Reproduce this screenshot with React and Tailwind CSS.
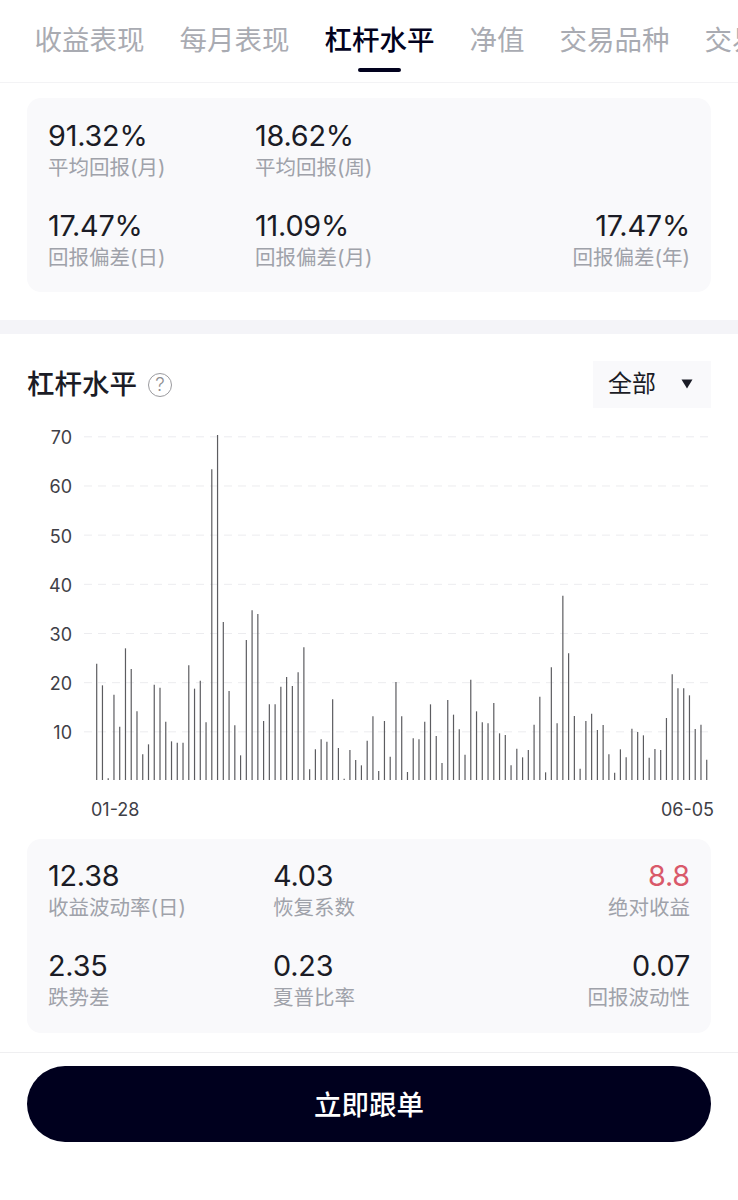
const FONT = "font-['Inter','Noto_Sans_CJK_SC',sans-serif]";

const tabs = ['收益表现', '每月表现', '杠杆水平', '净值', '交易品种', '交易'];

const topStats = [
  [
    { value: '91.32%', label: '平均回报(月)' },
    { value: '18.62%', label: '平均回报(周)' },
    null,
  ],
  [
    { value: '17.47%', label: '回报偏差(日)' },
    { value: '11.09%', label: '回报偏差(月)' },
    { value: '17.47%', label: '回报偏差(年)' },
  ],
];

const bottomStats = [
  [
    { value: '12.38', label: '收益波动率(日)' },
    { value: '4.03', label: '恢复系数' },
    { value: '8.8', label: '绝对收益', red: true },
  ],
  [
    { value: '2.35', label: '跌势差' },
    { value: '0.23', label: '夏普比率' },
    { value: '0.07', label: '回报波动性' },
  ],
];

// y of each bar's top, read off the picture at 3x (baseline is 1082)
const barTops = [
  733, 798, 1077, 826, 922, 687, 749, 876, 1005, 975, 796, 805, 907, 966, 970, 970, 738, 808, 784, 909,
  150, 47, 608, 815, 918, 1008, 662, 573, 584, 905, 855, 855, 802, 773, 800, 759, 684, 1050, 990, 960,
  967, 840, 986, 1078, 992, 1022, 1038, 964, 891, 1055, 905, 1012, 788, 891, 1058, 957, 960, 907, 855, 950,
  1031, 842, 886, 930, 1006, 781, 876, 909, 912, 851, 942, 947, 1038, 988, 1014, 992, 916, 832, 1059, 744,
  912, 529, 702, 890, 1048, 905, 883, 932, 917, 1005, 1060, 990, 1014, 928, 938, 948, 1015, 989, 992, 896,
  765, 807, 807, 828, 929, 916, 1021,
];

const yTicks = [70, 60, 50, 40, 30, 20, 10];

function StatCard({ rows, cols, pad }) {
  return (
    <div className={`mx-[27px] grid ${cols} ${pad} gap-y-[26px] rounded-[14px] bg-[#f9f9fb] px-[21px]`}>
      {rows.flat().map((item, i) =>
        item ? (
          <div key={i} className={i % 3 === 2 ? 'text-right' : ''}>
            <div className={`text-[28.8px] leading-[36px] tracking-[-0.2px] ${item.red ? 'text-[#d9596a]' : 'text-[#1b1c26]'}`}>{item.value}</div>
            <div className="text-[20.5px] leading-[28px] text-[#9fa2aa]">{item.label}</div>
          </div>
        ) : (
          <div key={i} />
        ),
      )}
    </div>
  );
}

function LeverageChart() {
  const baseY = 356;
  return (
    <svg width="738" height="400" className="mt-[16px] block">
      {yTicks.map((tick) => {
        const y = baseY + 1 - tick * 4.917;
        return (
          <g key={tick}>
            <line x1="84" x2="711" y1={y} y2={y} stroke="#ececef" strokeWidth="1" strokeDasharray="8 6" />
            <text x="72" y={y + 7.5} textAnchor="end" fontSize="18" fill="#3f4047">
              {tick}
            </text>
          </g>
        );
      })}
      {barTops.map((top, i) => {
        const x = 96.7 + i * 5.755;
        return <line key={i} x1={x} x2={x} y1={(top - 1082) / 3 + baseY} y2={baseY} stroke="#5c5c60" strokeWidth="1.2" />;
      })}
      <text x="91" y="391.5" fontSize="18" fill="#3f4047">01-28</text>
      <text x="714" y="391.5" textAnchor="end" fontSize="18" fill="#3f4047">06-05</text>
    </svg>
  );
}

export default function App() {
  return (
    <div className={`h-[1200px] w-[738px] overflow-hidden bg-white ${FONT}`}>
      <div className="flex h-[83px] gap-[35px] overflow-hidden border-b border-[#f3f3f5] pl-[34.5px]">
        {tabs.map((tab, i) => (
          <div key={tab} className="relative shrink-0 pt-[19.5px]">
            <span className={`text-[27.5px] leading-[40px] ${i === 2 ? 'font-medium text-[#02021e]' : 'text-[#a9abb2]'}`}>{tab}</span>
            {i === 2 && <div className="absolute left-[33.5px] top-[68px] h-[4px] w-[43px] rounded-full bg-[#02021e]" />}
          </div>
        ))}
      </div>

      <div className="mt-[15px]">
        <StatCard rows={topStats} cols="grid-cols-[207px_1fr_auto]" pad="pt-[20px] pb-[20px]" />
      </div>

      <div className="mt-[28px] h-[14px] bg-[#f4f4f8]" />

      <div className="mt-[27px] flex items-center justify-between pl-[27px] pr-[27px]">
        <div className="flex items-center gap-[11px]">
          <span className="text-[27.5px] font-medium leading-[47px] text-[#1b1c26]">杠杆水平</span>
          <span className="flex h-[24px] w-[24px] items-center justify-center rounded-full border border-[#9a9a9e] text-[19px] font-light leading-none text-[#8f8f93]">?</span>
        </div>
        <div className="flex h-[47px] w-[118px] items-center bg-[#f9f9fb] pl-[15px]">
          <span className="-mt-[2px] text-[24px] leading-none text-[#1b1c26]">全部</span>
          <svg width="12" height="10" viewBox="0 0 12 10" className="-mt-[2px] ml-[25px]">
            <polygon points="0.5,0.5 11.5,0.5 6,9.5" fill="#1b1c26" />
          </svg>
        </div>
      </div>

      <LeverageChart />

      <div className="mt-[15px]">
        <StatCard rows={bottomStats} cols="grid-cols-[225px_1fr_auto]" pad="pt-[19px] pb-[21px]" />
      </div>

      <div className="mt-[19px] border-t border-[#efeff1] px-[27px] pt-[13px]">
        <button className="flex h-[76px] w-full items-center justify-center rounded-full bg-[#00001e] pt-[3px] text-[27.5px] font-medium text-white">立即跟单</button>
      </div>
    </div>
  );
}
